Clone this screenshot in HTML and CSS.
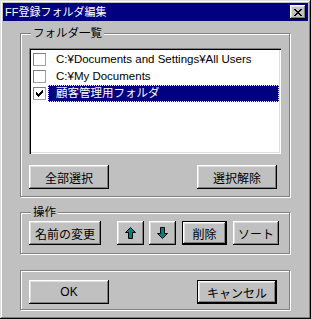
FILE: index.html
```html
<!DOCTYPE html>
<html lang="ja">
<head>
  <meta charset="UTF-8" />
  <meta name="viewport" content="width=device-width, initial-scale=1.0"/>
  <title>FF登録フォルダ編集</title>
  <link rel="stylesheet" href="styles.css">
</head>
<body>

  <div class="window">
    <div class="titlebar">
      <span class="title">FF登録フォルダ編集</span>
      <button class="close-btn" aria-label="閉じる">
        <svg width="8" height="7" viewBox="0 0 8 7" shape-rendering="crispEdges">
          <path d="M0 0h2v1H0zM6 0h2v1H6zM1 1h2v1H1zM5 1h2v1H5zM2 2h4v1H2zM3 3h2v1H3zM2 4h4v1H2zM1 5h2v1H1zM5 5h2v1H5zM0 6h2v1H0zM6 6h2v1H6z" fill="#000"/>
        </svg>
      </button>
    </div>

    <div class="content">
      <fieldset class="group group-list">
        <legend>フォルダ一覧</legend>
        <ul class="listbox">
          <li class="row">
            <span class="check"></span>
            <span class="label">C:¥Documents and Settings¥All Users</span>
          </li>
          <li class="row">
            <span class="check"></span>
            <span class="label">C:¥My Documents</span>
          </li>
          <li class="row selected">
            <span class="check">
              <svg width="7" height="7" viewBox="0 0 7 7" shape-rendering="crispEdges">
                <path d="M6 0h1v1H6zM5 1h2v1H5zM0 2h1v1H0zM4 2h3v1H4zM0 3h2v1H0zM3 3h3v1H3zM0 4h5v1H0zM1 5h3v1H1zM2 6h1v1H2z" fill="#000"/>
              </svg>
            </span>
            <span class="label">顧客管理用フォルダ</span>
          </li>
        </ul>
        <div class="btn-row">
          <button class="btn btn-wide">全部選択</button>
          <button class="btn btn-wide">選択解除</button>
        </div>
      </fieldset>

      <fieldset class="group group-ops">
        <legend>操作</legend>
        <div class="ops-row">
          <button class="btn btn-rename">名前の変更</button>
          <button class="btn btn-arrow btn-up" aria-label="上へ">
            <svg width="11" height="12" viewBox="0 0 11 12">
              <polygon points="5.5,0.5 10.5,5.5 7.5,5.5 7.5,11.5 3.5,11.5 3.5,5.5 0.5,5.5" fill="#008080" stroke="#000" stroke-width="1"/>
            </svg>
          </button>
          <button class="btn btn-arrow btn-down" aria-label="下へ">
            <svg width="11" height="12" viewBox="0 0 11 12">
              <polygon points="5.5,11.5 10.5,6.5 7.5,6.5 7.5,0.5 3.5,0.5 3.5,6.5 0.5,6.5" fill="#008080" stroke="#000" stroke-width="1"/>
            </svg>
          </button>
          <button class="btn btn-default btn-delete">削除</button>
          <button class="btn btn-sort">ソート</button>
        </div>
      </fieldset>

      <div class="group group-footer">
        <div class="btn-row">
          <button class="btn btn-wide">OK</button>
          <button class="btn btn-wide btn-default">キャンセル</button>
        </div>
      </div>
    </div>
  </div>

</body>
</html>
```

FILE: styles.css
```css
* {
  box-sizing: border-box;
  margin: 0;
  padding: 0;
}

body {
  font-family: "Liberation Sans", "Noto Sans CJK JP", sans-serif;
  font-size: 12px;
  color: #000;
  background: #c0c0c0;
}

.window {
  width: 311px;
  height: 319px;
  padding: 3px;
  background: #c0c0c0;
  box-shadow: inset -1px -1px #000, inset 1px 1px #dfdfdf, inset -2px -2px #808080, inset 2px 2px #fff;
  display: flex;
  flex-direction: column;
}

.titlebar {
  height: 18px;
  background: #000080;
  color: #fff;
  display: flex;
  align-items: center;
  justify-content: space-between;
  padding: 0 2px;
}

.title {
  font-size: 11px;
  line-height: 18px;
}

.close-btn {
  width: 16px;
  height: 14px;
  border: none;
  background: #c0c0c0;
  box-shadow: inset -1px -1px #000, inset 1px 1px #fff, inset -2px -2px #808080, inset 2px 2px #dfdfdf;
  display: flex;
  align-items: center;
  justify-content: center;
  padding-right: 1px;
}

.content {
  padding: 5px 18px 0 17px;
  display: flex;
  flex-direction: column;
}

.group {
  border: 1px solid #808080;
  box-shadow: 1px 1px 0 #fff, inset 1px 1px 0 #fff;
  min-width: 0;
  padding: 0 8px;
}

.group legend {
  margin-left: 2px;
  padding: 0 2px;
  font-size: 11.5px;
  line-height: 14px;
  background: #c0c0c0;
}

.group-list {
  padding-bottom: 7px;
}

.group-ops {
  margin-top: 8px;
  padding-bottom: 8px;
}

.group-footer {
  margin-top: 16px;
  padding-top: 9px;
  padding-bottom: 5px;
}

.listbox {
  list-style: none;
  margin-top: 8px;
  height: 106px;
  background: #fff;
  padding: 3px 2px 2px 2px;
  box-shadow: inset 1px 1px #808080, inset 2px 2px #000, inset -1px -1px #fff, inset -2px -2px #dfdfdf;
}

.row {
  height: 17px;
  display: flex;
  align-items: center;
}

.check {
  width: 13px;
  height: 13px;
  margin-left: 2px;
  border: 1px solid;
  border-color: #808080 #a0a0a0 #a0a0a0 #808080;
  background: #fff;
  display: flex;
  align-items: center;
  justify-content: center;
}

.label {
  flex: 1;
  height: 17px;
  margin-left: 2px;
  padding-left: 7px;
  font-size: 11.5px;
  line-height: 15px;
  border: 1px solid transparent;
  white-space: nowrap;
}

.selected .label {
  background: #000080;
  color: #fff;
  border: 1px dotted #ffffc0;
}

.btn-row {
  display: flex;
  justify-content: space-between;
  padding-right: 4px;
}

.group-list .btn-row {
  margin-top: 11px;
}

.ops-row {
  display: flex;
  margin-top: 2px;
}

.btn {
  font: inherit;
  height: 24px;
  border: none;
  background: #c0c0c0;
  color: #000;
  box-shadow: inset -1px -1px #000, inset 1px 1px #fff, inset -2px -2px #808080, inset 2px 2px #dfdfdf;
  display: flex;
  align-items: center;
  justify-content: center;
}

.btn-default {
  box-shadow: inset 0 0 0 1px #000, inset -2px -2px #000, inset 2px 2px #fff, inset -3px -3px #808080, inset 3px 3px #dfdfdf;
}

.btn-wide {
  width: 80px;
}

.btn-rename {
  width: 72px;
}

.btn-arrow {
  width: 27px;
}

.btn-up {
  margin-left: 16px;
}

.btn-down {
  margin-left: 5px;
}

.btn-delete {
  width: 45px;
  margin-left: 6px;
}

.btn-sort {
  width: 46px;
  margin-left: 6px;
}
```
